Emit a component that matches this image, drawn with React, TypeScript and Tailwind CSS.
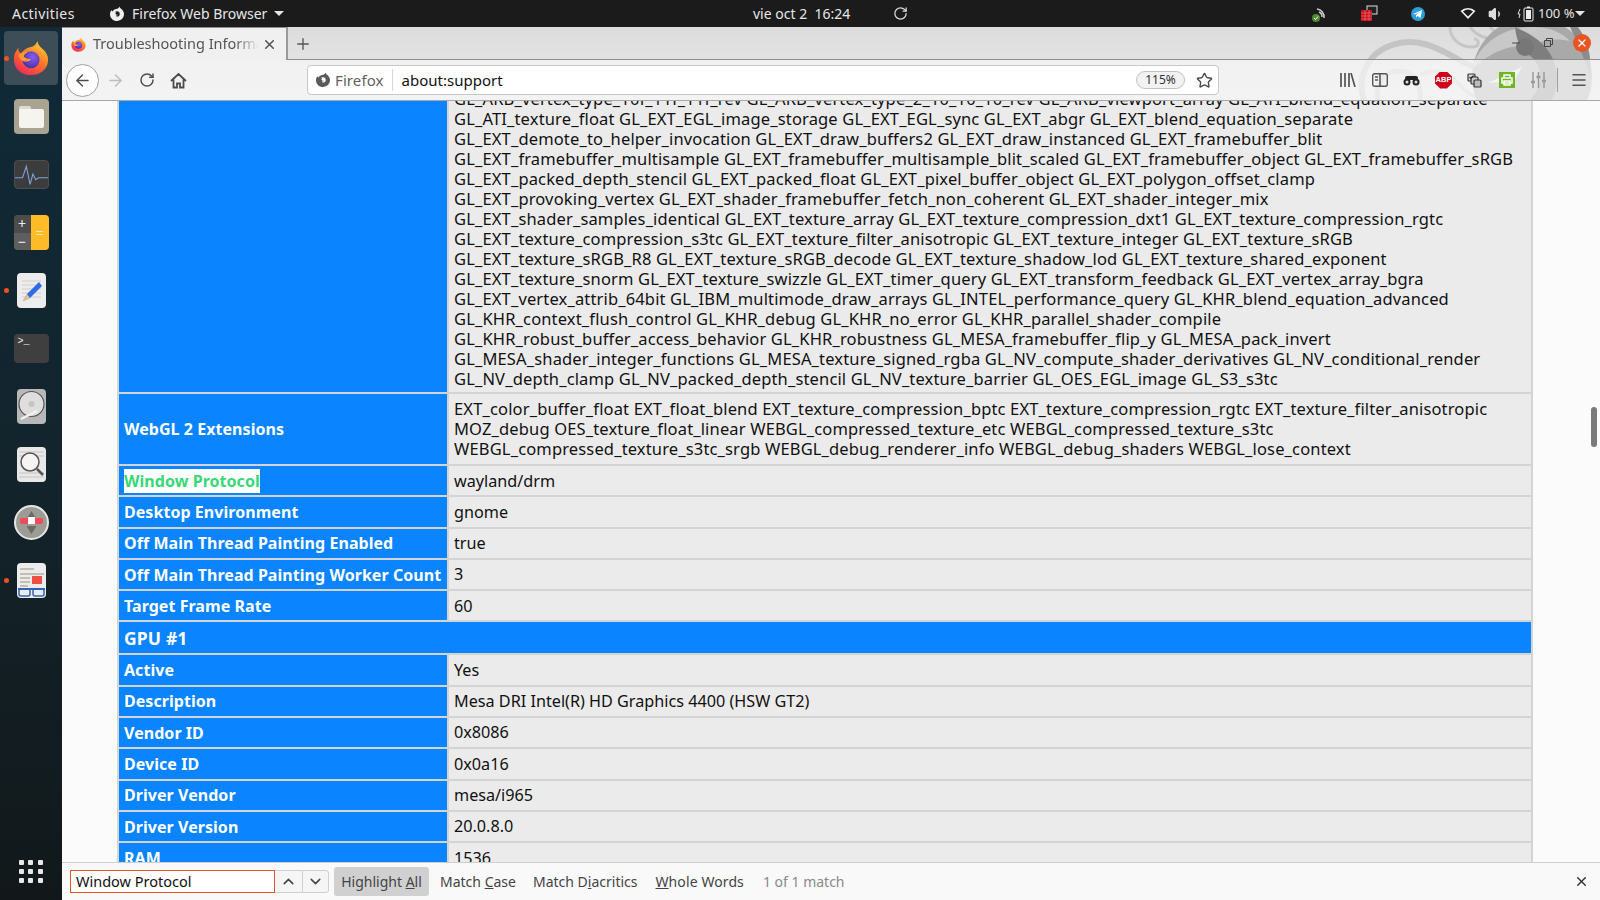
import { ArrowLeft, ArrowRight, RotateCw, Plus, X, Star, Menu, ChevronUp, ChevronDown, Minus, Volume1 } from 'lucide-react';

const extLines = [
  'GL_ARB_vertex_type_10f_11f_11f_rev GL_ARB_vertex_type_2_10_10_10_rev GL_ARB_viewport_array GL_ATI_blend_equation_separate',
  'GL_ATI_texture_float GL_EXT_EGL_image_storage GL_EXT_EGL_sync GL_EXT_abgr GL_EXT_blend_equation_separate',
  'GL_EXT_demote_to_helper_invocation GL_EXT_draw_buffers2 GL_EXT_draw_instanced GL_EXT_framebuffer_blit',
  'GL_EXT_framebuffer_multisample GL_EXT_framebuffer_multisample_blit_scaled GL_EXT_framebuffer_object GL_EXT_framebuffer_sRGB',
  'GL_EXT_packed_depth_stencil GL_EXT_packed_float GL_EXT_pixel_buffer_object GL_EXT_polygon_offset_clamp',
  'GL_EXT_provoking_vertex GL_EXT_shader_framebuffer_fetch_non_coherent GL_EXT_shader_integer_mix',
  'GL_EXT_shader_samples_identical GL_EXT_texture_array GL_EXT_texture_compression_dxt1 GL_EXT_texture_compression_rgtc',
  'GL_EXT_texture_compression_s3tc GL_EXT_texture_filter_anisotropic GL_EXT_texture_integer GL_EXT_texture_sRGB',
  'GL_EXT_texture_sRGB_R8 GL_EXT_texture_sRGB_decode GL_EXT_texture_shadow_lod GL_EXT_texture_shared_exponent',
  'GL_EXT_texture_snorm GL_EXT_texture_swizzle GL_EXT_timer_query GL_EXT_transform_feedback GL_EXT_vertex_array_bgra',
  'GL_EXT_vertex_attrib_64bit GL_IBM_multimode_draw_arrays GL_INTEL_performance_query GL_KHR_blend_equation_advanced',
  'GL_KHR_context_flush_control GL_KHR_debug GL_KHR_no_error GL_KHR_parallel_shader_compile',
  'GL_KHR_robust_buffer_access_behavior GL_KHR_robustness GL_MESA_framebuffer_flip_y GL_MESA_pack_invert',
  'GL_MESA_shader_integer_functions GL_MESA_texture_signed_rgba GL_NV_compute_shader_derivatives GL_NV_conditional_render',
  'GL_NV_depth_clamp GL_NV_packed_depth_stencil GL_NV_texture_barrier GL_OES_EGL_image GL_S3_s3tc',
];

const webgl2Lines = [
  'EXT_color_buffer_float EXT_float_blend EXT_texture_compression_bptc EXT_texture_compression_rgtc EXT_texture_filter_anisotropic',
  'MOZ_debug OES_texture_float_linear WEBGL_compressed_texture_etc WEBGL_compressed_texture_s3tc',
  'WEBGL_compressed_texture_s3tc_srgb WEBGL_debug_renderer_info WEBGL_debug_shaders WEBGL_lose_context',
];

function Row({ label, value }: { label: React.ReactNode; value: string }) {
  return (
    <div className="flex gap-[2px] h-[29.3px]">
      <div className="w-[328px] shrink-0 bg-[#0a84ff] text-white font-bold text-[16px] tracking-[0.05px] pl-[5px] flex items-center whitespace-nowrap">{label}</div>
      <div className="flex-1 bg-[#ebebeb] text-[#111] text-[16.200px] tracking-normal pl-[5px] flex items-center whitespace-nowrap">{value}</div>
    </div>
  );
}

function BlockRow({ label, lines, className }: { label?: string; lines: string[]; className: string }) {
  return (
    <div className="flex gap-[2px]">
      <div className="w-[328px] shrink-0 bg-[#0a84ff] text-white font-bold text-[16px] tracking-[0.05px] pl-[5px] flex items-center">{label}</div>
      <div className={`flex-1 bg-[#ebebeb] text-[#111] pl-[5px] whitespace-nowrap ${className}`}>
        {lines.map((l) => (
          <div key={l} className="h-[20px] leading-[20px]">{l}</div>
        ))}
      </div>
    </div>
  );
}

function FirefoxLogo({ size, id }: { size: number; id: string }) {
  return (
    <svg width={size} height={size} viewBox="0 0 40 40">
      <defs>
        <linearGradient id={`${id}o`} x1="0.8" y1="0" x2="0.2" y2="1">
          <stop offset="0" stopColor="#ffd53a" />
          <stop offset="0.45" stopColor="#ff7a25" />
          <stop offset="1" stopColor="#f0245e" />
        </linearGradient>
        <radialGradient id={`${id}p`} cx="0.6" cy="0.35" r="0.8">
          <stop offset="0" stopColor="#8a5cf0" />
          <stop offset="1" stopColor="#3a2a9a" />
        </radialGradient>
      </defs>
      <path d="M27 1c1 5 4 7 7 10 4 4 5 8 5 11 0 10-8 17-19 17S1 32 1 21c0-5 2-9 5-12 0 3 1 5 3 6 2-4 6-6 10-7 4-1 7-3 8-7z" fill={`url(#${id}o)`} />
      <circle cx="20" cy="22" r="9.5" fill={`url(#${id}p)`} />
      <path d="M6 17c3-4 7-5 11-4-3 1-5 3-5 5 2 3 5 3 8 3-1 2-3 3-6 3-4 0-7-3-8-7z" fill="#ff9a2e" />
    </svg>
  );
}

function FirefoxMono({ className }: { className: string }) {
  return (
    <svg width="16" height="16" viewBox="0 0 16 16" className={className}>
      <path
        fill="currentColor"
        fillRule="evenodd"
        d="M10.5 0.5c0.3 1.4 1.4 2 2.4 3 1.4 1.4 2.1 2.9 2.1 4.6C15 12 11.9 15 8 15S1 12 1 8.2C1 6.4 1.6 5 2.6 3.9c0 0.8 0.3 1.4 0.8 1.7 1-1.6 2.4-2.2 3.8-2.5 1.4-.4 2.8-1 3.3-2.6zM8 5.2c-.9 0-1.7.4-2.2 1 .6-.1 1.3 0 1.6.4-.5.2-1 .6-1 1.1.5 1 1.4 1 2.5 1-.5.7-1.2 1-2.1.9C7 10.4 7.500 10.600 8 10.600a2.700 2.700 0 0 0 0-5.400z"
      />
    </svg>
  );
}

function AppTile({ children, className = '' }: { children?: React.ReactNode; className?: string }) {
  return <div className={`rounded-[4px] flex items-center justify-center overflow-hidden ${className}`}>{children}</div>;
}

function DockSlot({ children, dot }: { children: React.ReactNode; dot?: boolean }) {
  return (
    <div className="relative h-[58px] flex items-center justify-center">
      {dot && <div className="absolute left-[4px] top-1/2 -mt-[2.500px] w-[5px] h-[5px] rounded-full bg-[#e95420]" />}
      {children}
    </div>
  );
}

function Dock() {
  return (
    <div className="w-[62px] shrink-0 flex flex-col items-stretch bg-gradient-to-b from-[#102a38] via-[#13242c] to-[#12181a] pt-[4px] pb-[8px]">
      <div className="relative mx-[4px] h-[54px] rounded-[4px] bg-[#3d4e59] flex items-center justify-center">
        <div className="absolute left-0 top-1/2 -mt-[2.500px] w-[5px] h-[5px] rounded-full bg-[#e95420]" />
        <FirefoxLogo size={36} id="dock" />
      </div>
      <div className="h-[2px]" />
      <DockSlot>
        <AppTile className="w-[35px] h-[35px] bg-[#a9a392] relative">
          <div className="absolute left-[5px] top-[7px] w-[12px] h-[6px] rounded-t-[2px] bg-[#dedbd2]" />
          <div className="absolute left-[5px] top-[10px] w-[25px] h-[19px] rounded-[2px] bg-[#f6f4ef]" />
        </AppTile>
      </DockSlot>
      <DockSlot>
        <AppTile className="w-[35px] h-[29px] bg-[#3c3c3c] border border-[#4d4d4d]">
          <svg width="35" height="29" viewBox="0 0 35 29" fill="none" stroke="#7da0d8" strokeWidth="1.200">
            <path d="M0 18h8l4-12 4 19 3-11 3 6 3-2h10" />
          </svg>
        </AppTile>
      </DockSlot>
      <DockSlot>
        <AppTile className="w-[35px] h-[35px] bg-[#4a4a4a]">
          <div className="w-[17px] h-full flex flex-col text-[#eee] text-[14px] leading-[17px] text-center">
            <div className="h-[18px] bg-[#4c4c4c]">+</div>
            <div className="h-[17px] bg-[#5e5e5e]">−</div>
          </div>
          <div className="flex-1 h-full bg-[#fdbb27] text-[#fde7ae] text-[15px] leading-[35px] text-center">=</div>
        </AppTile>
      </DockSlot>
      <DockSlot dot>
        <AppTile className="w-[29px] h-[35px] bg-[#ececec]">
          <svg width="29" height="35" viewBox="0 0 29 35" fill="none">
            <path d="M5 8h19M5 12h19M5 16h19M5 20h19M5 24h19" stroke="#d0d0d0" />
            <path d="M6 28l4-7L22 9l3 4-12 12z" fill="#2f6be4" />
            <path d="M6 28l4-7 3 4z" fill="#eec089" />
          </svg>
        </AppTile>
      </DockSlot>
      <DockSlot>
        <AppTile className="w-[35px] h-[29px] bg-[#3f3f3f] items-start justify-start">
          <span className="text-[#eee] text-[10px] leading-[14px] pl-[4px] pt-[1px] font-['Liberation_Mono',monospace]">&gt;_</span>
        </AppTile>
      </DockSlot>
      <DockSlot>
        <AppTile className="w-[29px] h-[35px] bg-[#b8b8b8]">
          <svg width="29" height="35" viewBox="0 0 29 35" fill="none">
            <circle cx="14.500" cy="15" r="12.500" fill="#dedede" stroke="#555" strokeWidth="1.200" />
            <circle cx="14.500" cy="15" r="3" fill="#c4c4c4" />
            <path d="M4 30l16-8" stroke="#f2f2f2" strokeWidth="2.500" />
          </svg>
        </AppTile>
      </DockSlot>
      <DockSlot>
        <AppTile className="w-[29px] h-[35px] bg-[#e8e8e8]">
          <svg width="29" height="35" viewBox="0 0 29 35" fill="none" stroke="#555">
            <path d="M2 5h25M2 9h25M2 26h25M2 30h25" stroke="#c4c4c4" />
            <circle cx="13" cy="15" r="9" fill="#f4f4f4" strokeWidth="1.500" />
            <path d="M20 22l6 6" strokeWidth="2.500" />
          </svg>
        </AppTile>
      </DockSlot>
      <DockSlot>
        <div className="w-[35px] h-[35px] rounded-full bg-[#9c9c94] border-[2px] border-[#e5e5e5] flex items-center justify-center">
          <svg width="29" height="29" viewBox="0 0 29 29">
            <path d="M14.500 3l5 8h-10zM14.500 26l5-8h-10z" fill="#6a6a66" />
            <rect x="3" y="10" width="23" height="6" rx="2" fill="#ef4b5b" />
            <rect x="11" y="9" width="7" height="7" fill="#fff" />
          </svg>
        </div>
      </DockSlot>
      <DockSlot dot>
        <AppTile className="w-[29px] h-[35px] bg-[#ececec]">
          <svg width="29" height="35" viewBox="0 0 29 35" fill="none">
            <path d="M3 6h14M3 11h24M3 15h10M3 19h10M3 23h8" stroke="#b5ae9e" strokeWidth="1.500" />
            <rect x="15" y="13" width="10" height="8" fill="#ee4f43" />
            <path d="M1 26h27" stroke="#2f64b8" strokeWidth="2" />
            <rect x="2" y="26" width="11" height="7" rx="2" stroke="#2f64b8" strokeWidth="1.500" />
            <rect x="16" y="26" width="11" height="7" rx="2" stroke="#2f64b8" strokeWidth="1.500" />
          </svg>
        </AppTile>
      </DockSlot>
      <div className="flex-1" />
      <div className="grid grid-cols-3 gap-[4px] w-[24px] mx-auto mb-[9px]">
        {Array.from({ length: 9 }).map((_, i) => (
          <div key={i} className="w-[5px] h-[5px] rounded-[1px] bg-[#e8e8e8]" />
        ))}
      </div>
    </div>
  );
}

function TopBar() {
  return (
    <div className="h-[27px] bg-[#1b1b1b] text-[#e6e6e6] text-[14px] flex items-center relative shrink-0">
      <span className="ml-[12px] w-[62px] tracking-[0.45px]">Activities</span>
      <FirefoxMono className="ml-[35px] text-[#eee]" />
      <span className="ml-[7px]">Firefox Web Browser</span>
      <div className="ml-[7px] w-0 h-0 border-x-[5px] border-x-transparent border-t-[5px] border-t-[#e6e6e6]" />
      <span className="absolute left-[753px]">vie oct 2&nbsp; 16:24</span>
      <RotateCw size={15} className="absolute left-[893px] text-[#ddd]" />
      <svg width="16" height="16" viewBox="0 0 16 16" className="absolute left-[1311px]">
        <circle cx="5" cy="12" r="4" fill="#4e8a32" />
        <path d="M3 12l1.500 1.500L7 10.500" stroke="#fff" fill="none" />
        <path d="M6 3a8 8 0 0 1 7 9M8 6a5 5 0 0 1 3 5" stroke="#ccc" strokeWidth="1.500" fill="none" />
      </svg>
      <svg width="18" height="18" viewBox="0 0 18 18" className="absolute left-[1360px]">
        <rect x="7" y="1" width="10" height="8" fill="#222" stroke="#ddd" />
        <rect x="1" y="5" width="11" height="11" fill="#c8101c" />
        <path d="M1 8h11M1 11h11M1 14h11M5 5v11M9 5v11" stroke="#f07070" strokeWidth="0.700" />
      </svg>
      <div className="absolute left-[1411px] w-[14px] h-[14px] rounded-full bg-[#2c9fdb] flex items-center justify-center">
        <svg width="10" height="10" viewBox="0 0 10 10"><path d="M0 5l9-4-1.500 8-3-2-1.500 1.500V6l4-3-5 2.500z" fill="#fff" /></svg>
      </div>
      <svg width="16" height="12" viewBox="0 0 16 12" className="absolute left-[1460px]"><path d="M8 11L0.500 3a11 11 0 0 1 15 0zM8 8.500L3 3.500a8 8 0 0 1 10 0z" fill="#eee" fillRule="evenodd" /></svg>
      <Volume1 size={16} className="absolute left-[1488px] text-[#ddd] fill-[#ddd]" />
      <svg width="18" height="16" viewBox="0 0 18 16" className="absolute left-[1517px]" fill="none">
        <path d="M3 3L1 8h2L2 12" stroke="#ddd" />
        <rect x="7" y="2" width="9" height="13" rx="1" stroke="#eee" />
        <rect x="9" y="4" width="5" height="9" fill="#eee" />
        <rect x="10" y="0.500" width="3" height="1.500" fill="#eee" />
      </svg>
      <span className="absolute left-[1538px] text-[13px]">100 %</span>
      <div className="absolute left-[1575px] w-0 h-0 border-x-[5px] border-x-transparent border-t-[5px] border-t-[#e6e6e6]" />
    </div>
  );
}

// Persona theme drawing behind the tab strip and toolbar
function ThemeArt() {
  return (
    <svg className="absolute right-0 top-0 pointer-events-none" width="300" height="74" viewBox="0 0 300 74" fill="none">
      <path d="M64 74C56 50 68 26 92 18c24-8 44 2 62 12 14 8 26 14 42 14" stroke="#c4c4c4" strokeWidth="6" />
      <path d="M78 74c-4-14 6-30 20-30 16 0 24 12 22 30" stroke="#c9c9c9" strokeWidth="5" />
      <path d="M120 48c14-8 30-2 40 10 6 7 12 12 22 14" stroke="#cdcdcd" strokeWidth="4" />
      <path d="M150 0c0 10 8 20 22 20 8 0 8-8 2-8M170 0c6 8 14 12 26 12M190 0c4 5 10 8 18 8" stroke="#c6c6c6" strokeWidth="3" />
      <circle cx="232" cy="50" r="60" fill="#a9a9a9" />
      <path d="M172 42c6-24 30-42 60-42 16 0 28 4 38 14-16-4-32 0-40 6-20-4-40 6-58 22z" fill="#c8c8c8" />
      <path d="M215 0c14 6 34 16 40 38 4 14 2 26-4 36h-22c16-16 14-36 0-46-6-4-12-10-14-28z" fill="#7e7e7e" />
      <circle cx="225" cy="20" r="9" fill="#777" />
      <path d="M270 0h8c10 14 14 30 12 48-6-16-12-32-20-48z" fill="#8c8c8c" />
      <path d="M188 56l34-16-8 14z" fill="#f2f2f2" />
    </svg>
  );
}

function BrowserChrome() {
  return (
    <div className="relative h-[74px] shrink-0 bg-gradient-to-b from-[#dcdcdc] to-[#ececec] overflow-hidden">
      <ThemeArt />
      <div className="relative h-[33px] flex items-stretch border-b border-[#8f8f8f]">
        <div className="w-[224px] h-[33px] bg-[#f0f0f0] border-t border-[#8d8d8d] flex items-center text-[#555] text-[14.500px] overflow-hidden">
          <div className="ml-[9px] w-[15px] shrink-0"><FirefoxLogo size={15} id="tab" /></div>
          <span className="ml-[7px] w-[166px] whitespace-nowrap overflow-hidden [mask-image:linear-gradient(to_right,black_85%,transparent)]">Troubleshooting Informa</span>
          <X size={15} strokeWidth={2.500} className="ml-[3px] shrink-0 text-[#555]" />
        </div>
        <div className="w-[2px] bg-[#9a9a9a]" />
        <Plus size={18} strokeWidth={1.800} className="ml-[6px] mt-[8px] text-[#555]" />
        <div className="flex-1" />
        <div className="flex items-center text-[#4a4a4a] -mt-[1px]">
          <Minus size={12} className="mr-[22px]" />
          <svg width="9" height="9" viewBox="0 0 9 9" fill="none" stroke="#444" className="mr-[20px]"><path d="M0.500 2.500h6v6h-6zM2.500 2.500v-2h6v6h-2" /></svg>
          <div className="w-[18px] h-[18px] rounded-full bg-[#e95420] flex items-center justify-center mr-[9px]">
            <X size={12} strokeWidth={2.500} className="text-white" />
          </div>
        </div>
      </div>
      <div className="relative h-[41px] bg-[#f6f6f6]/75 flex items-center border-b border-[#a8a8a8] text-[#4c4c4c]">
        <div className="ml-[4px] w-[33px] h-[33px] rounded-full border border-[#9f9f9f] bg-white flex items-center justify-center">
          <ArrowLeft size={19} strokeWidth={1.800} />
        </div>
        <ArrowRight size={19} strokeWidth={1.800} className="ml-[7px] text-[#bdbdbd]" />
        <RotateCw size={16} strokeWidth={2.200} className="ml-[14px]" />
        <svg width="17" height="17" viewBox="0 0 17 17" fill="none" stroke="#4c4c4c" strokeWidth="1.800" className="ml-[15px]">
          <path d="M1 9l7.500-7L16 9M3.500 7.500V15.500h3.500v-4h3v4h3.500V7.500" />
        </svg>
        <div className="ml-[120px] w-[912px] h-[30px] bg-white rounded-[4px] border border-[#c8c8c8] flex items-center shrink-0">
          <FirefoxMono className="ml-[7px] text-[#5a5a5a]" />
          <span className="ml-[4px] text-[#5f5f5f] text-[15px] tracking-[0.1px]">Firefox</span>
          <div className="ml-[8px] w-px h-[22px] bg-[#d6d6d6]" />
          <span className="ml-[9px] text-[#111] text-[15px]">about:support</span>
          <div className="flex-1" />
          <div className="w-[49px] h-[18px] rounded-full bg-[#f2f2f2] border border-[#c4c4c4] text-[#333] text-[12px] flex items-center justify-center">115%</div>
          <Star size={17} strokeWidth={2} className="ml-[11px] mr-[5px] text-[#4c4c4c]" />
        </div>
        <svg width="16" height="14" viewBox="0 0 16 14" fill="none" stroke="#555" strokeWidth="1.700" className="ml-[121px] shrink-0"><path d="M1 0v14M5 0v14M9 0v14M11 0l4 14" /></svg>
        <svg width="16" height="14" viewBox="0 0 16 14" fill="none" stroke="#555" strokeWidth="1.400" className="ml-[16px] shrink-0"><rect x="0.700" y="0.700" width="14.600" height="12.600" rx="2" /><path d="M8 1v12" strokeWidth="1.600" /><path d="M3 4h3M3 7h3" /></svg>
        <svg width="17" height="11" viewBox="0 0 17 11" className="ml-[15px] shrink-0"><circle cx="4" cy="7" r="3.500" fill="#222" /><circle cx="13" cy="7" r="3.500" fill="#222" /><rect x="2" y="1" width="13" height="4" rx="2" fill="#222" /><circle cx="4" cy="7" r="1.500" fill="#ddd" /><circle cx="13" cy="7" r="1.500" fill="#ddd" /></svg>
        <div className="ml-[15px] w-[17px] h-[17px] shrink-0 bg-[#d0021b] [clip-path:polygon(30%_0,70%_0,100%_30%,100%_70%,70%_100%,30%_100%,0_70%,0_30%)] flex items-center justify-center text-white text-[7.500px] font-bold font-['Liberation_Sans',sans-serif]">ABP</div>
        <svg width="15" height="15" viewBox="0 0 15 15" fill="none" stroke="#333" strokeWidth="1.200" className="ml-[15px] shrink-0"><rect x="1" y="1" width="7" height="7" rx="1" fill="#ddd" /><rect x="4" y="4" width="7" height="7" rx="1" fill="#ccc" /><rect x="7" y="7" width="7" height="7" rx="1" fill="#bbb" /><path d="M2.500 4l1.500 1.500 2.500-3" /></svg>
        <div className="ml-[17px] w-[16px] h-[16px] shrink-0 bg-[#6fb526] flex items-center justify-center">
          <svg width="12" height="12" viewBox="0 0 12 12" fill="none" stroke="#fff" strokeWidth="1.500"><path d="M3 4V1h6v3M1 4h10v5H1zM3 7h6v4H3z" /></svg>
        </div>
        <svg width="15" height="16" viewBox="0 0 15 16" fill="none" stroke="#9a9a9a" strokeWidth="1.500" className="ml-[16px] shrink-0"><path d="M2 0v16M7.500 0v16M13 0v16" /><path d="M0 10h4M5.500 5h4M11 9h4" strokeWidth="2.500" /></svg>
        <div className="ml-[11px] w-px h-[24px] bg-[#a0a0a0] shrink-0" />
        <Menu size={18} strokeWidth={2} className="ml-[12px] shrink-0 text-[#555]" />
      </div>
    </div>
  );
}

function FindBar() {
  return (
    <div className="h-[38px] shrink-0 bg-[#f9f9fa] border-t border-[#cfcfcf] flex items-center text-[14px] text-[#444]">
      <div className="ml-[8px] w-[205px] h-[23px] bg-white border border-[#e95420] text-[#111] text-[14.500px] pl-[5px] flex items-center whitespace-nowrap">Window Protocol</div>
      <div className="w-[27px] h-[23px] bg-[#f5f5f5] border-y border-[#cfcfcf] flex items-center justify-center text-[#444]"><ChevronUp size={17} strokeWidth={2.200} /></div>
      <div className="w-[27px] h-[23px] bg-[#f5f5f5] border border-[#cfcfcf] rounded-r-[3px] flex items-center justify-center text-[#444]"><ChevronDown size={17} strokeWidth={2.200} /></div>
      <div className="ml-[5px] w-[95px] h-[29px] bg-[#d0d0d0] rounded-[3px] flex items-center justify-center whitespace-nowrap">Highlight&nbsp;<span className="underline">A</span>ll</div>
      <span className="ml-[11px] whitespace-nowrap">Match <span className="underline">C</span>ase</span>
      <span className="ml-[17px] whitespace-nowrap">Match D<span className="underline">i</span>acritics</span>
      <span className="ml-[18px] whitespace-nowrap tracking-[0.1px]"><span className="underline">W</span>hole Words</span>
      <span className="ml-[19px] text-[#8a8a8a] whitespace-nowrap">1 of 1 match</span>
      <div className="flex-1" />
      <X size={15} strokeWidth={2.200} className="mr-[11px] text-[#333]" />
    </div>
  );
}

export default function App() {
  return (
    <div className="w-[1600px] h-[900px] flex flex-col overflow-hidden font-['Noto_Sans',sans-serif]">
      <TopBar />
      <div className="flex-1 min-h-0 flex">
        <Dock />
        <div className="flex-1 min-w-0 flex flex-col">
          <BrowserChrome />
          <main className="relative flex-1 min-h-0 overflow-hidden bg-[#fbfbfb]">
            <div className="ml-[55px] w-[1416px] -mt-[19.500px] bg-[#d4d4d4] p-[2px] flex flex-col gap-[2px] text-[16.500px] tracking-[0.15px]">
              <BlockRow lines={extLines} className="pt-[5px] pb-[3.500px]" />
              <BlockRow label="WebGL 2 Extensions" lines={webgl2Lines} className="py-[5px]" />
              <Row label={<span className="bg-white text-[#38d878]">Window Protocol</span>} value="wayland/drm" />
              <Row label="Desktop Environment" value="gnome" />
              <Row label="Off Main Thread Painting Enabled" value="true" />
              <Row label="Off Main Thread Painting Worker Count" value="3" />
              <Row label="Target Frame Rate" value="60" />
              <div className="h-[30.900px] bg-[#0a84ff] text-white font-bold text-[17.500px] pl-[5px] flex items-center">GPU #1</div>
              <Row label="Active" value="Yes" />
              <Row label="Description" value="Mesa DRI Intel(R) HD Graphics 4400 (HSW GT2)" />
              <Row label="Vendor ID" value="0x8086" />
              <Row label="Device ID" value="0x0a16" />
              <Row label="Driver Vendor" value="mesa/i965" />
              <Row label="Driver Version" value="20.0.8.0" />
              <Row label="RAM" value="1536" />
            </div>
            <div className="absolute left-[1529px] top-[306px] w-[6px] h-[40px] rounded-full bg-[#7b7b7b]" />
          </main>
          <FindBar />
        </div>
      </div>
    </div>
  );
}
